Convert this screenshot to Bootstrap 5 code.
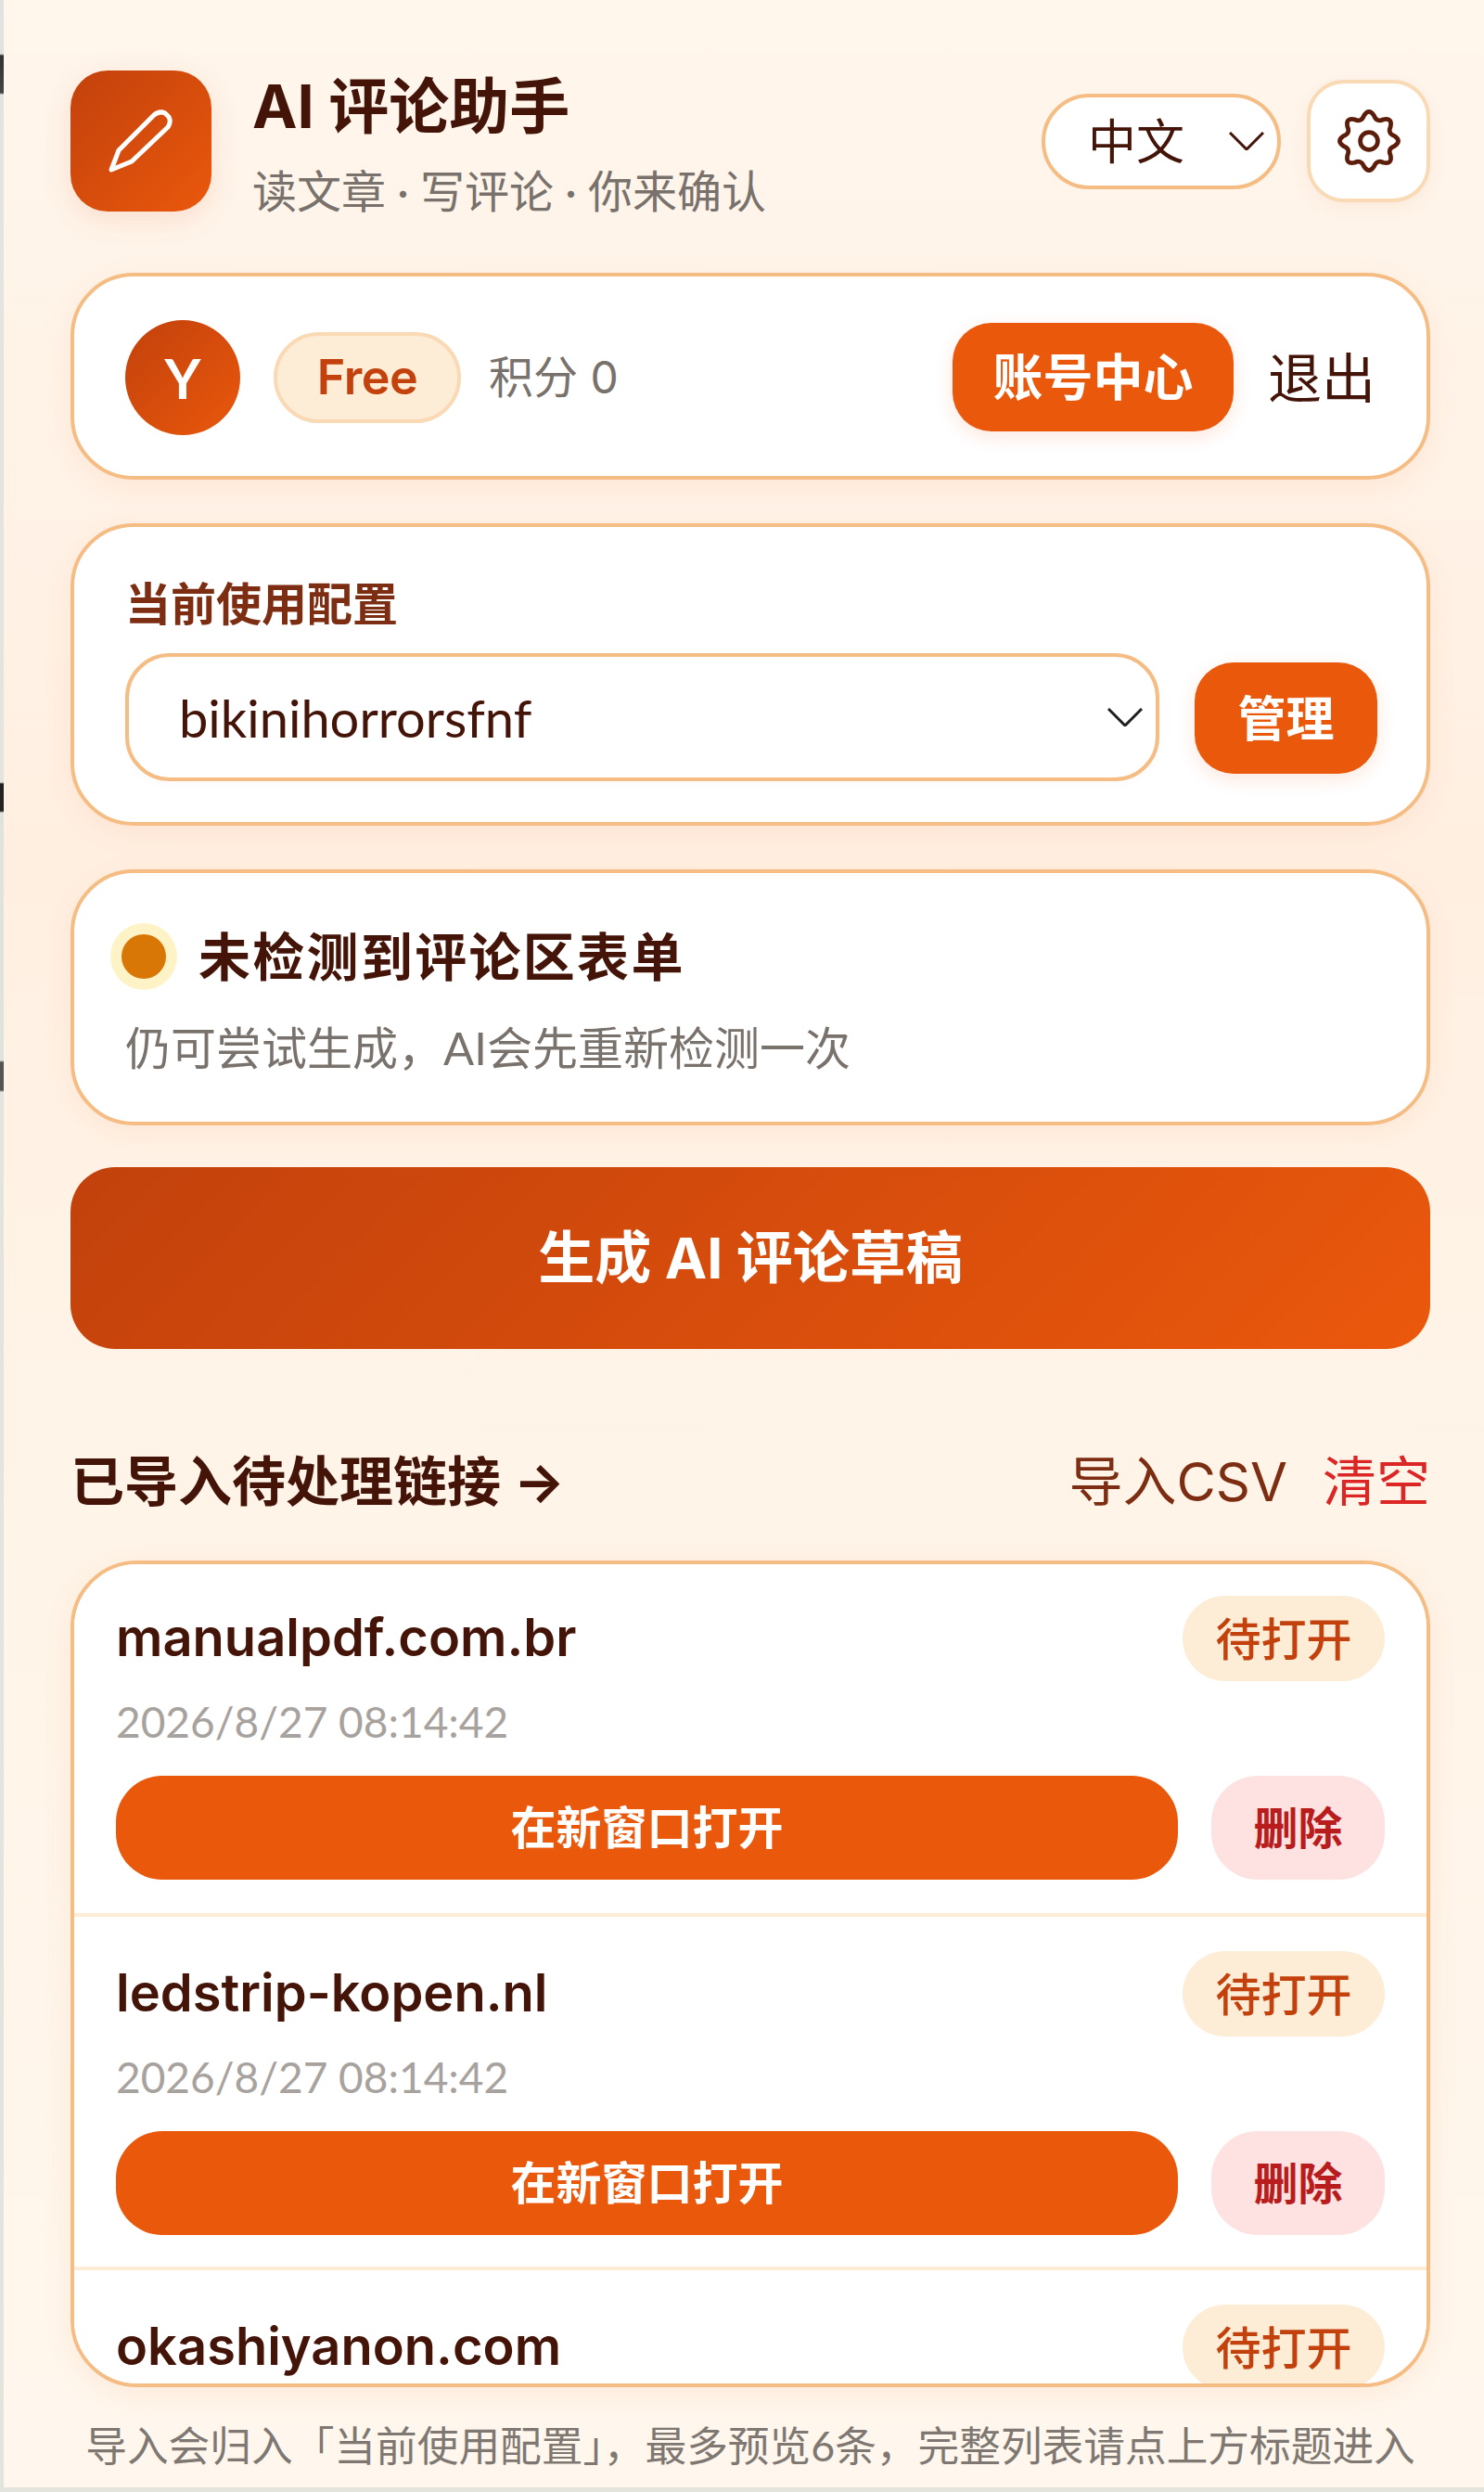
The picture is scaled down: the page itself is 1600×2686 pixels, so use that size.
<!DOCTYPE html>
<html lang="zh-CN">
<head>
<meta charset="utf-8">
<title>AI 评论助手</title>
<link href="https://cdn.jsdelivr.net/npm/bootstrap@5.3.0/dist/css/bootstrap.min.css" rel="stylesheet">
<style>
html{background:linear-gradient(to bottom,#e2e2de 0,#e2e2de 58px,#333 60px,#444 100px,#e4e4df 102px,#e4e4df 843px,#222 845px,#222 874px,#e0e2dc 876px,#e0e2dc 1143px,#555 1145px,#555 1175px,#e4e4df 1177px);height:100%}
body{width:1596px;height:2681px;margin:0 0 0 4px;overflow:hidden;padding:76px 58px 0 72px;
 background:linear-gradient(to bottom,#fff6ec 0,#ffefe1 35%,#fff3e6 50%,#fff7ed 100%);
 font-family:"Lato","Noto Sans CJK SC",sans-serif;color:#431407;box-sizing:border-box}
.hdr{height:152px;margin-bottom:66px}
.logo-box{width:152px;height:152px;border-radius:40px;background:linear-gradient(135deg,#c2410c,#ea580c);box-shadow:0 8px 32px rgba(194,65,12,.12);flex:none}
.ttl-wrap{margin-left:44px}
.ttl{font-size:65px;line-height:76px;font-weight:700;color:#431407;margin:11px 0 21px;white-space:nowrap;font-family:"Inter","Noto Sans CJK SC",sans-serif}
.sub{font-size:48px;line-height:64px;color:#78716c;white-space:nowrap}
.lang-sel.form-select{width:258px;height:103px;margin-right:28px;border:4px solid #f5bd84;border-radius:52px;padding:0 0 0 46px;font-size:52px;line-height:60px;color:#431407;box-shadow:none;
 background-image:url("data:image/svg+xml,%3csvg xmlns='http://www.w3.org/2000/svg' viewBox='0 0 38 20'%3e%3cpath fill='none' stroke='%23431407' stroke-width='3' d='M1 1l18 18L37 1'/%3e%3c/svg%3e");background-size:38px 20px;background-position:right 14px center;font-family:inherit;flex:none}
.gear-btn{width:133px;height:132px;border:4px solid #fad9b5;border-radius:40px;background:#fff;padding:0;box-shadow:0 6px 20px rgba(194,65,12,.06);flex:none}
.pane.card{border:4px solid #f5bd84;border-radius:68px;background:#fff;box-shadow:0 8px 32px rgba(234,88,12,.07);margin-bottom:47px}
.acct{height:223px;padding:2px 55px 0 55px}
.ava{width:124px;height:124px;border-radius:50%;background:linear-gradient(135deg,#c2410c,#ea580c);color:#fff;font-size:60px;font-weight:700;flex:none}
.free-tag.badge{width:202px;height:98px;margin-left:36px;border:4px solid #fad9b5;border-radius:49px;background:#fdecd6;color:#c2410c;font-size:52px;line-height:1;padding:0;font-family:"Inter","Noto Sans CJK SC",sans-serif;font-weight:600;letter-spacing:-.5px}
.pts{font-size:48px;color:#78716c;margin-left:30px;font-family:"Inter","Noto Sans CJK SC",sans-serif}
.acct-btn.btn{width:303px;height:117px;border-radius:42px;background:#ea580c;border:0;color:#fff;font-size:54px;font-weight:600;padding:0;margin-left:auto;box-shadow:0 6px 20px rgba(234,88,12,.14)}
.out-link.btn{border:0;background:none;padding:0;margin-left:37px;font-size:58px;line-height:60px;color:#431407;border-radius:0}
.cfg{height:326px;padding:54px 50px 0 55px}
.cfg-lbl{font-size:49px;line-height:56px;font-weight:600;color:#7c2d12;margin:0 0 26px;display:block}
.cfg-sel.form-select{width:1115px;height:138px;border:4px solid #f5bd84;border-radius:48px;padding:2px 0 0 54px;font-size:56px;color:#431407;font-family:inherit;box-shadow:0 4px 12px rgba(0,0,0,.02);
 background-image:url("data:image/svg+xml,%3csvg xmlns='http://www.w3.org/2000/svg' viewBox='0 0 38 20'%3e%3cpath fill='none' stroke='%231f1f1f' stroke-width='3' d='M1 1l18 18L37 1'/%3e%3c/svg%3e");background-size:38px 20px;background-position:right 14px center;flex:none}
.mng-btn.btn{width:197px;height:120px;border-radius:42px;background:#ea580c;border:0;color:#fff;font-size:52px;font-weight:600;padding:0;margin:2px 0 0 38px;flex:none;box-shadow:0 6px 20px rgba(234,88,12,.14)}
.status{height:276px;padding:50px 40px 0 55px}
.dot{width:48px;height:48px;border-radius:50%;background:#d97706;box-shadow:0 0 0 12px #fef3c7;flex:none;margin:0 35px 0 -4px}
.st-ttl{font-size:56px;line-height:80px;font-weight:700;letter-spacing:2.3px;color:#431407}
.st-sub{font-size:49px;line-height:64px;color:#78716c;margin-top:26px}
.cta.btn{display:block;width:100%;height:196px;margin-top:-2px;border:0;border-radius:48px;background:linear-gradient(135deg,#c2410c,#ea580c);color:#fff;font-size:61px;font-weight:700;padding:2px 0 0;font-family:"Inter","Noto Sans CJK SC",sans-serif}
.sec-hd{height:80px;margin:103px 0 45px}
.sec-ttl{font-size:58px;line-height:80px;font-weight:700;color:#431407;font-family:"Inter","Noto Sans CJK SC",sans-serif}
.csv-link,.clr-link{font-size:58px;line-height:80px;font-weight:400;font-family:"Inter","Noto Sans CJK SC",sans-serif}
.csv-link{color:#7c2d12;margin-right:38px}
.clr-link{color:#dc2626}
.links.card{height:891px;border:4px solid #f5bd84;border-radius:72px;overflow:hidden;background:#fff;box-shadow:0 8px 32px rgba(234,88,12,.08)}
.links .list-group-item{height:380px;padding:34px 45px 0;border:0;border-bottom:4px solid #fdecd6;flex:none;background:#fff}
.links .list-group-item + .list-group-item{height:381px;padding-top:37px}
.dom{font-size:56px;line-height:86px;font-weight:600;color:#431407;font-family:"Inter",sans-serif;margin-top:-3px}
.top-row{height:92px}
.wait.badge{width:218px;height:92px;border-radius:46px;background:#fdecd6;color:#c2410c;font-size:49px;font-weight:500;padding:0;line-height:1}
.when{font-size:46px;line-height:64px;color:#a8a29e;margin:12px 0 26px}
.open-btn.btn{height:112px;border:0;border-radius:50px;background:#ea580c;color:#fff;font-size:49px;font-weight:600;padding:0}
.del-btn.btn{width:187px;height:112px;margin-left:36px;border:0;border-radius:50px;background:#fee2e2;color:#b91c1c;font-size:48px;font-weight:600;padding:0;flex:none}
.foot{font-size:44.7px;line-height:60px;color:#78716c;text-align:center;margin:33px -40px 0;white-space:nowrap;opacity:.95}
</style>
</head>
<body>
<header class="hdr d-flex align-items-center">
  <div class="logo-box d-flex align-items-center justify-content-center">
    <svg width="72" height="72" viewBox="0 0 72 72"><path d="M4 67L12 46L50 8Q56 3 62 6L66 10Q69 15 65 21L26 58Z" fill="none" stroke="#fff" stroke-width="5" stroke-linejoin="round"/></svg>
  </div>
  <div class="ttl-wrap flex-grow-1">
    <div class="ttl">AI 评论助手</div>
    <div class="sub">读文章 · 写评论 · 你来确认</div>
  </div>
  <select class="form-select lang-sel"><option>中文</option></select>
  <button class="btn gear-btn d-flex align-items-center justify-content-center" aria-label="设置">
    <svg width="78" height="78" viewBox="-12 -12 24 24"><path fill="none" stroke="#5c1d0a" stroke-width="1.45" stroke-linejoin="round" d="M8.435 -1.678Q11 0 8.435 1.678Q6.098 2.526 7.151 4.778Q7.78 7.78 4.778 7.151Q2.526 6.098 1.678 8.435Q0 11 -1.678 8.435Q-2.526 6.098 -4.778 7.151Q-7.78 7.78 -7.151 4.778Q-6.098 2.526 -8.435 1.678Q-11 0 -8.435 -1.678Q-6.098 -2.526 -7.151 -4.778Q-7.78 -7.78 -4.778 -7.151Q-2.526 -6.098 -1.678 -8.435Q0 -11 1.678 -8.435Q2.526 -6.098 4.778 -7.151Q7.78 -7.78 7.151 -4.778Q6.098 -2.526 8.435 -1.678Z"/><circle r="2.9" fill="none" stroke="#5c1d0a" stroke-width="1.45"/></svg>
  </button>
</header>

<section class="card pane acct flex-row align-items-center">
  <div class="ava d-flex align-items-center justify-content-center">Y</div>
  <span class="badge free-tag d-inline-flex align-items-center justify-content-center">Free</span>
  <span class="pts">积分 0</span>
  <button class="btn acct-btn">账号中心</button>
  <button class="btn out-link">退出</button>
</section>

<section class="card pane cfg">
  <label class="cfg-lbl">当前使用配置</label>
  <div class="d-flex align-items-center">
    <select class="form-select cfg-sel"><option>bikinihorrorsfnf</option></select>
    <button class="btn mng-btn">管理</button>
  </div>
</section>

<section class="card pane status">
  <div class="d-flex align-items-center">
    <span class="dot"></span>
    <span class="st-ttl">未检测到评论区表单</span>
  </div>
  <div class="st-sub">仍可尝试生成，AI会先重新检测一次</div>
</section>

<button class="btn cta">生成 AI 评论草稿</button>

<div class="sec-hd d-flex align-items-center justify-content-between">
  <div class="sec-ttl">已导入待处理链接 →</div>
  <div class="d-flex"><span class="csv-link">导入CSV</span><span class="clr-link">清空</span></div>
</div>

<div class="card links">
  <div class="list-group list-group-flush">
    <div class="list-group-item">
      <div class="top-row d-flex justify-content-between align-items-center"><span class="dom">manualpdf.com.br</span><span class="badge wait d-inline-flex align-items-center justify-content-center">待打开</span></div>
      <div class="when">2026/8/27 08:14:42</div>
      <div class="d-flex"><button class="btn open-btn flex-grow-1">在新窗口打开</button><button class="btn del-btn">删除</button></div>
    </div>
    <div class="list-group-item">
      <div class="top-row d-flex justify-content-between align-items-center"><span class="dom">ledstrip-kopen.nl</span><span class="badge wait d-inline-flex align-items-center justify-content-center">待打开</span></div>
      <div class="when">2026/8/27 08:14:42</div>
      <div class="d-flex"><button class="btn open-btn flex-grow-1">在新窗口打开</button><button class="btn del-btn">删除</button></div>
    </div>
    <div class="list-group-item">
      <div class="top-row d-flex justify-content-between align-items-center"><span class="dom">okashiyanon.com</span><span class="badge wait d-inline-flex align-items-center justify-content-center">待打开</span></div>
    </div>
  </div>
</div>
<p class="foot">导入会归入「当前使用配置」，最多预览6条，完整列表请点上方标题进入</p>
<script src="https://cdn.jsdelivr.net/npm/bootstrap@5.3.0/dist/js/bootstrap.bundle.min.js"></script>
</body>
</html>
